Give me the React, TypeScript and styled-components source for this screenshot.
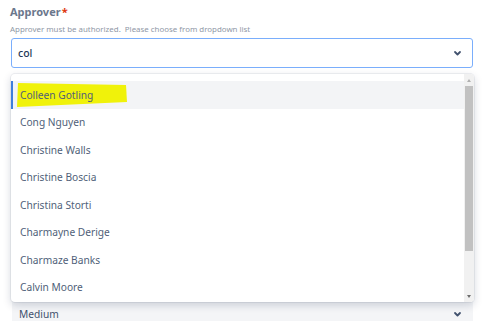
import styled, { createGlobalStyle } from 'styled-components'

const GlobalStyle = createGlobalStyle`
    html, body {
        margin: 0;
        padding: 0;
        background: #ffffff;
        font-family: 'Noto Sans', 'Open Sans', sans-serif;
        overflow: hidden;
    }
`

const Page = styled.div`
    width: 484px;
    height: 321px;
    overflow: hidden;
    padding: 4px 11px 0 10px;
    box-sizing: border-box;
`

const Label = styled.div`
    font-size: 11px;
    font-weight: 700;
    color: #6b778c;
    line-height: 16px;
    height: 16px;
`

const Required = styled.span`
    color: #de350b;
    margin-left: 1px;
`

const HelpText = styled.div`
    font-size: 7.9px;
    color: #8f97a6;
    line-height: 10px;
    margin-top: 4px;
    white-space: pre;
`

const SelectWrap = styled.div`
    position: relative;
    margin-left: 1px;
    margin-top: 4px;
`

const InputBox = styled.div`
    height: 30px;
    border: 1.5px solid #7aaefc;
    border-radius: 3px;
    box-sizing: border-box;
    display: flex;
    align-items: center;
    justify-content: space-between;
    padding: 0 10px 0 6px;
    font-size: 10.5px;
    font-weight: 500;
    color: #253858;
`

const Menu = styled.div`
    position: absolute;
    left: 0;
    top: 36px;
    width: 463px;
    height: 228px;
    background: #ffffff;
    border-radius: 4px;
    box-shadow: 0 0 0 1px rgba(9, 30, 66, 0.06), 0 3px 8px rgba(9, 30, 66, 0.18);
    display: grid;
    grid-template-columns: 1fr 10px;
    overflow: hidden;
    z-index: 2;
`

const List = styled.div`
    padding-top: 7px;
    overflow: hidden;
`

const Option = styled.div<{ $active?: boolean }>`
    position: relative;
    height: 27.5px;
    display: flex;
    align-items: center;
    padding-left: 7px;
    font-size: 10.2px;
    color: #505f79;
    background: ${p => (p.$active ? '#f3f4f6' : 'transparent')};
    border-left: 2px solid ${p => (p.$active ? '#3f7fdc' : 'transparent')};
`

const OptionText = styled.span`
    position: relative;
    z-index: 1;
`

const Marker = styled.svg`
    position: absolute;
    left: 4px;
    top: 2px;
    width: 112px;
    height: 25px;
    z-index: 0;
`

const Scrollbar = styled.div`
    display: flex;
    flex-direction: column;
    background: #f1f1f1;
    padding-top: 1px;
`

const Arrow = styled.div<{ $down?: boolean }>`
    height: 11px;
    display: flex;
    align-items: center;
    justify-content: center;

    &::after {
        content: '';
        border-left: 2.5px solid transparent;
        border-right: 2.5px solid transparent;
        ${p =>
            p.$down
                ? 'border-top: 3px solid #6d6d6d;'
                : 'border-bottom: 3px solid #b0b0b0;'}
    }
`

const Track = styled.div`
    flex: 1;
    display: flex;
    flex-direction: column;
`

const Thumb = styled.div`
    height: 165px;
    margin: 0 1px;
    background: #c1c1c1;
`

const NextSelect = styled.div`
    margin-top: 230px;
    margin-left: 1px;
    height: 32px;
    background: #f4f5f7;
    border-radius: 3px;
    display: flex;
    align-items: center;
    justify-content: space-between;
    padding: 0 11px 0 7px;
    font-size: 10.2px;
    color: #42526e;
`

function Chevron() {
    return (
        <svg width="9" height="7" viewBox="0 0 9 7">
            <path
                d="M2 2 L4.5 4.5 L7 2"
                fill="none"
                stroke="#42526e"
                strokeWidth="1.8"
                strokeLinecap="round"
                strokeLinejoin="round"
            />
        </svg>
    )
}

const approvers: string[] = [
    'Colleen Gotling',
    'Cong Nguyen',
    'Christine Walls',
    'Christine Boscia',
    'Christina Storti',
    'Charmayne Derige',
    'Charmaze Banks',
    'Calvin Moore',
]

function App() {
    return (
        <>
            <GlobalStyle />
            <Page>
                <Label>
                    Approver<Required>*</Required>
                </Label>
                <HelpText>Approver must be authorized.  Please choose from dropdown list</HelpText>

                <SelectWrap>
                    <InputBox>
                        <span>col</span>
                        <Chevron />
                    </InputBox>

                    <Menu>
                        <List>
                            {approvers.map((name, i) => (
                                <Option key={name} $active={i === 0}>
                                    {i === 0 && (
                                        <Marker viewBox="0 0 112 25" preserveAspectRatio="none">
                                            <polygon
                                                points="1,0 109,2 110,19 0,24"
                                                fill="#f0f20a"
                                            />
                                        </Marker>
                                    )}
                                    <OptionText>{name}</OptionText>
                                </Option>
                            ))}
                        </List>
                        <Scrollbar>
                            <Arrow />
                            <Track>
                                <Thumb />
                            </Track>
                            <Arrow $down />
                        </Scrollbar>
                    </Menu>

                    <NextSelect>
                        <span>Medium</span>
                        <Chevron />
                    </NextSelect>
                </SelectWrap>
            </Page>
        </>
    )
}

export default App
